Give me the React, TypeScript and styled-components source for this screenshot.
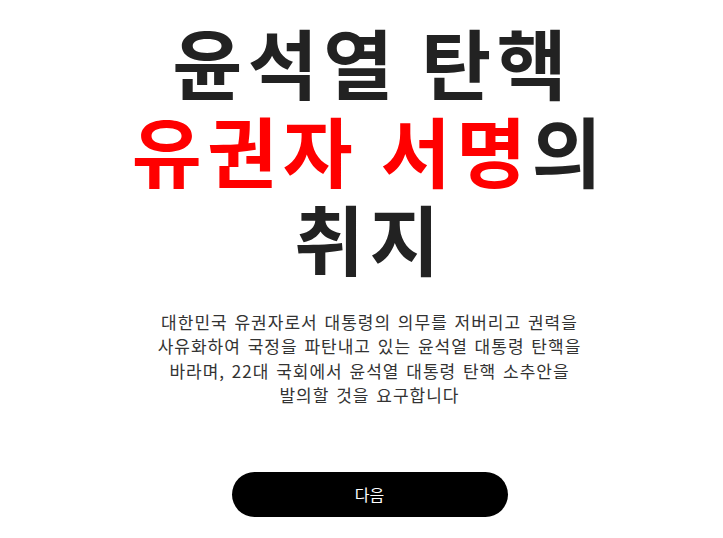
import React from 'react'
import styled, { createGlobalStyle } from 'styled-components'

const Global = createGlobalStyle`
  html, body {
    margin: 0;
    padding: 0;
    background: #ffffff;
  }
  body {
    font-family: "Noto Sans CJK KR", "Noto Sans", sans-serif;
  }
`

const Page = styled.main`
  width: 723px;
  min-height: 538px;
  display: flex;
  flex-direction: column;
  align-items: center;
  padding: 17px 0 0 16px;
  box-sizing: border-box;
`

const Title = styled.h1`
  margin: 0;
  font-size: 76px;
  line-height: 88px;
  font-weight: 700;
  color: #222222;
  text-align: center;
  letter-spacing: 5.5px;
  text-indent: 5.5px;
`

const Mark = styled.span<{ $red?: boolean }>`
  color: ${(p) => (p.$red ? '#ff0000' : 'inherit')};
`

const Desc = styled.p`
  margin: 29px 0 0;
  width: 440px;
  font-size: 17px;
  line-height: 24.4px;
  font-weight: 400;
  color: #333333;
  text-align: center;
  letter-spacing: 1px;
  word-spacing: 2px;
  word-break: keep-all;
`

const NextButton = styled.button`
  margin-top: 64px;
  width: 276px;
  height: 45px;
  border: none;
  border-radius: 23px;
  background: #000000;
  color: #ffffff;
  font-family: "Noto Sans CJK KR", sans-serif;
  font-size: 16px;
  cursor: pointer;
`

export default function App() {
  return (
    <>
      <Global />
      <Page>
        <Title>
          윤석열 탄핵
          <br />
          <Mark $red>유권자 서명</Mark>의
          <br />
          취지
        </Title>
        <Desc>
          대한민국 유권자로서 대통령의 의무를 저버리고 권력을 사유화하여 국정을 파탄내고 있는 윤석열 대통령 탄핵을
          바라며, 22대 국회에서 윤석열 대통령 탄핵 소추안을 발의할 것을 요구합니다
        </Desc>
        <NextButton>다음</NextButton>
      </Page>
    </>
  )
}
